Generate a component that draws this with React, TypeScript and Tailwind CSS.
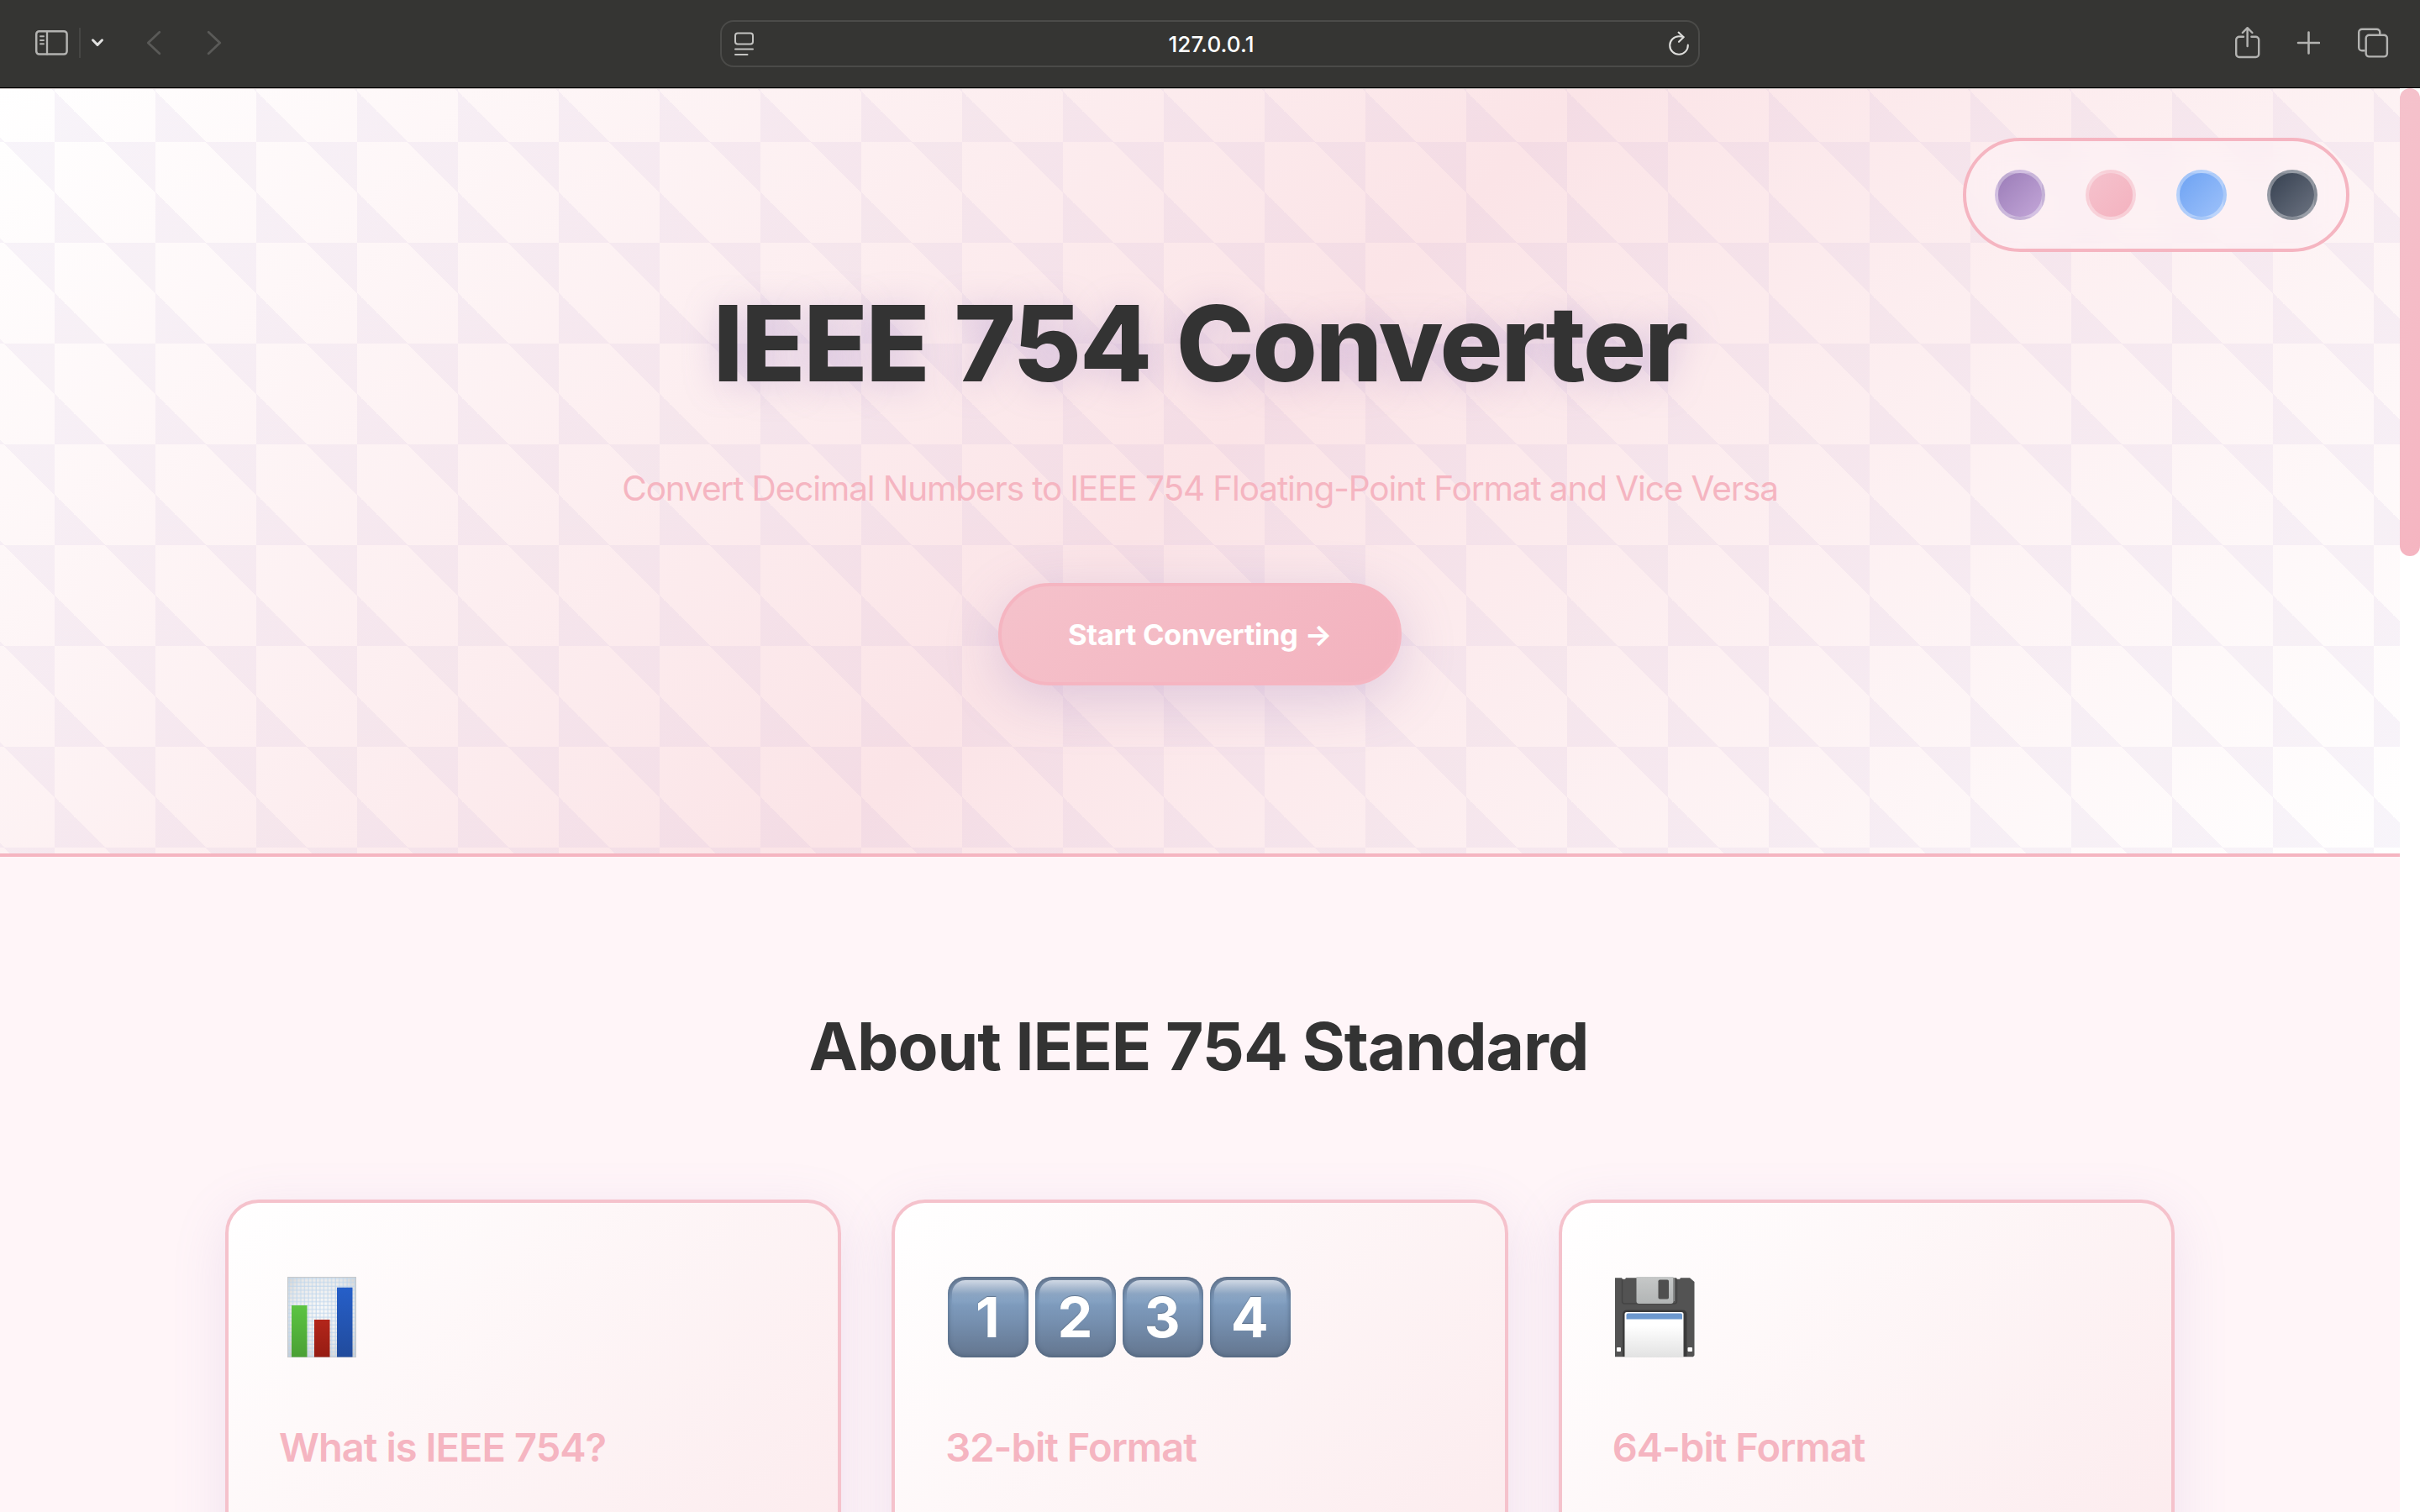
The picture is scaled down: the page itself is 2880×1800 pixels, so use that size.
import type { ReactNode } from "react";

function SidebarIcon() {
  return (
    <svg className="w-[40px] h-[32px]" viewBox="41 35 40 32" fill="none" stroke="#b3b3b1" strokeLinecap="round">
      <rect x="43.2" y="37.2" width="36.4" height="27.4" rx="3.5" strokeWidth="2.5" />
      <path d="M56 37.5v27" strokeWidth="2.3" />
      <path d="M48 43.3h4M48 48h4M48 52.3h4" strokeWidth="1.9" />
    </svg>
  );
}

function ChevronDown() {
  return (
    <svg className="w-[16px] h-[12px]" viewBox="108 46 16 12" fill="none" stroke="#e2e2e1" strokeWidth="3" strokeLinecap="round" strokeLinejoin="round">
      <path d="M110.5 48.8l5.5 5.6 5.5-5.6" />
    </svg>
  );
}

function ArrowLeft() {
  return (
    <svg className="w-[18px] h-[30px]" viewBox="174 36 18 30" fill="none" stroke="#5a5a58" strokeWidth="2.8" strokeLinecap="round" strokeLinejoin="round">
      <path d="M189.8 38.3L176.3 51l13.5 12.7" />
    </svg>
  );
}

function ArrowRight() {
  return (
    <svg className="w-[18px] h-[30px]" viewBox="246 36 18 30" fill="none" stroke="#5a5a58" strokeWidth="2.8" strokeLinecap="round" strokeLinejoin="round">
      <path d="M248.2 38.3L261.7 51l-13.5 12.7" />
    </svg>
  );
}

function ReaderIcon() {
  return (
    <svg className="w-[24px] h-[30px]" viewBox="873 37 24 30" fill="none" stroke="#c4c4c2" strokeWidth="2" strokeLinecap="round">
      <rect x="875" y="39.5" width="21" height="13" rx="3" />
      <path d="M875 58.4h21M875 65h14.5" />
    </svg>
  );
}

function ReloadIcon() {
  return (
    <svg className="w-[26px] h-[30px]" viewBox="1985 38 26 30" fill="none" stroke="#dededc" strokeWidth="2.1" strokeLinecap="round" strokeLinejoin="round">
      <path d="M2008.8 54.6a10.8 10.8 0 1 1-10.8-10.4q3 0 5.4.9" />
      <path d="M1997.6 39.6l6 5.6-5.6 5.6" />
    </svg>
  );
}

function ShareIcon() {
  return (
    <svg className="w-[32px] h-[40px]" viewBox="2659 31 32 40" fill="none" stroke="#b3b3b1" strokeWidth="2.4" strokeLinecap="round" strokeLinejoin="round">
      <path d="M2670 43.8h-5a3.8 3.8 0 0 0-3.8 3.8v16.8a3.6 3.6 0 0 0 3.6 3.6h19.8a3.6 3.6 0 0 0 3.6-3.6V47.6a3.8 3.8 0 0 0-3.8-3.8h-5" />
      <path d="M2674.6 55V33.5M2668.8 39l5.8-5.8 5.8 5.8" />
    </svg>
  );
}

function PlusIcon() {
  return (
    <svg className="w-[28px] h-[28px]" viewBox="2733 36.5 28 28" fill="none" stroke="#b3b3b1" strokeWidth="2.6" strokeLinecap="round">
      <path d="M2735 50.5h25M2747.5 38v25" />
    </svg>
  );
}

function TabsIcon() {
  return (
    <svg className="w-[38px] h-[36px]" viewBox="2805 33 38 36" fill="none" stroke="#b3b3b1" strokeWidth="2.4" strokeLinejoin="round">
      <path d="M2814.5 60.2h-3.5a3.8 3.8 0 0 1-3.8-3.8V38.5a3.8 3.8 0 0 1 3.8-3.8h17.5a3.8 3.8 0 0 1 3.8 3.8v3" />
      <rect x="2815.7" y="41.8" width="25.2" height="25.6" rx="3.8" />
    </svg>
  );
}

function Toolbar() {
  return (
    <header className="flex h-[105px] items-center border-b border-black bg-[#353533]">
      <div className="flex w-[857px] items-center pb-[2px] pl-[41px]">
        <SidebarIcon />
        <div className="ml-[13px] h-9 w-[2px] bg-[#464644]" />
        <div className="ml-3"><ChevronDown /></div>
        <div className="ml-[50px]"><ArrowLeft /></div>
        <div className="ml-[54px]"><ArrowRight /></div>
      </div>
      <div className="flex h-[56px] w-[1166px] items-center justify-between rounded-[16px] border-2 border-[#4b4b49] pr-[10px] pl-[14px]">
        <ReaderIcon />
        <span className="pt-px pl-px text-[26px] leading-[30px] font-medium tracking-[0.1px] text-white">127.0.0.1</span>
        <ReloadIcon />
      </div>
      <div className="flex flex-1 items-center justify-end pr-[37px] pb-[2px]">
        <ShareIcon />
        <div className="ml-[42px]"><PlusIcon /></div>
        <div className="ml-[44px]"><TabsIcon /></div>
      </div>
    </header>
  );
}

const swatches = [
  "bg-[linear-gradient(135deg,#9b7db8,#c3a6d8)]",
  "bg-[linear-gradient(135deg,#f5c2cd,#f4b2bf)]",
  "bg-[linear-gradient(135deg,#6ea3f3,#9dc1fa)]",
  "bg-[linear-gradient(135deg,#374151,#6b7280)]",
];

function ThemeSwitcher() {
  return (
    <div className="absolute top-[59px] right-[60px] flex h-[136px] items-center gap-12 rounded-full border-4 border-[#f5b5c1] bg-[#fdf1f5]/60 px-[34px] backdrop-blur-[20px]">
      {swatches.map((s) => (
        <button key={s} className={`size-[60px] rounded-full border-4 border-white/35 ${s}`} />
      ))}
    </div>
  );
}

function Hero() {
  return (
    <section className="relative h-[915px] shrink-0 border-b-4 border-[#f5b5c1] bg-[linear-gradient(135deg,#ffffff_0%,#fbe4e7_50%,#ffffff_100%)]">
      <div className="absolute inset-0 border-t border-[#c9c3c2] bg-[linear-gradient(45deg,rgba(175,145,205,0.09)_25%,transparent_25%,transparent_75%,rgba(175,145,205,0.09)_75%)] bg-[length:120px_120px] bg-[position:65px_63px]" />
      <div className="relative flex flex-col items-center pt-[229px]">
        <h1 className="text-[125px] leading-[150px] font-extrabold tracking-[-2.1px] text-[#333333] [word-spacing:5.5px] [text-shadow:0_4px_40px_rgba(155,125,195,0.34)]">
          IEEE 754 Converter
        </h1>
        <p className="mt-[66px] text-[40.5px] leading-[64px] font-[440] tracking-[-1.12px] text-[#f5b5c1]">
          Convert Decimal Numbers to IEEE 754 Floating-Point Format and Vice Versa
        </p>
        <button className="mt-[80px] flex h-[122px] w-[480px] items-center justify-center rounded-full border-4 border-[#f5b5c1] bg-[linear-gradient(135deg,#f5c2cb,#f3b2be)] pt-px text-[34.5px] font-[650] tracking-[-0.35px] text-white shadow-[0_16px_64px_rgba(155,125,190,0.3)]">
          Start Converting →
        </button>
      </div>
      <ThemeSwitcher />
    </section>
  );
}

function ChartEmoji() {
  return (
    <svg className="ml-[10px] h-24 w-[82px]" viewBox="0 0 82 96">
      <defs>
        <pattern id="grid" width="4.6" height="4.6" patternUnits="userSpaceOnUse">
          <path d="M0 2h4.6M2 0v4.6" stroke="#bdd4ec" strokeWidth="0.9" />
        </pattern>
        <radialGradient id="paper" cx="50%" cy="42%" r="75%">
          <stop offset="0" stopColor="#fafafa" />
          <stop offset="0.6" stopColor="#e9e9e9" />
          <stop offset="1" stopColor="#c6c6c6" />
        </radialGradient>
        <linearGradient id="green" x2="0" y2="1"><stop stopColor="#5cc442" /><stop offset="1" stopColor="#4aa034" /></linearGradient>
        <linearGradient id="red" x2="0" y2="1"><stop stopColor="#b3261b" /><stop offset="1" stopColor="#961c13" /></linearGradient>
        <linearGradient id="blue" x2="0" y2="1"><stop stopColor="#265fc9" /><stop offset="1" stopColor="#214b9c" /></linearGradient>
      </defs>
      <rect width="82" height="96" fill="url(#paper)" />
      <rect width="82" height="96" fill="url(#grid)" />
      <rect x="0.5" y="0.5" width="81" height="95" fill="none" stroke="#c6c8cb" />
      <rect x="5" y="34" width="18.5" height="61.5" fill="url(#green)" />
      <rect x="32" y="51" width="18.5" height="44.5" fill="url(#red)" />
      <rect x="59" y="12.7" width="18.5" height="82.8" fill="url(#blue)" />
    </svg>
  );
}

function Keycaps() {
  return (
    <div className="flex gap-2 pl-[3px]">
      {["1", "2", "3", "4"].map((d) => (
        <span
          key={d}
          className="relative flex size-24 items-center justify-center rounded-[20px] bg-[linear-gradient(180deg,#6f8099_0%,#7f9dbf_30%,#7690b0_55%,#63758e_100%)] text-[66.5px] leading-none font-bold text-white shadow-[inset_0_0_5px_1px_rgba(65,85,110,0.6)]"
        >
          <span className="absolute inset-x-[5px] top-[4px] h-[30px] rounded-t-[16px] bg-[linear-gradient(180deg,rgba(225,232,242,0.85),rgba(160,185,212,0.45)_55%,transparent)]" />
          <span className="relative -ml-[2px] [text-shadow:0_-1px_1px_rgba(60,75,95,0.5)]">{d}</span>
        </span>
      ))}
    </div>
  );
}

function FloppyEmoji() {
  return (
    <svg className="ml-[3px] h-24 w-[95px]" viewBox="0 0 95 96">
      <defs>
        <linearGradient id="label" x2="0" y2="1"><stop offset="0.3" stopColor="#ffffff" /><stop offset="1" stopColor="#e2e2e2" /></linearGradient>
        <linearGradient id="metal" x2="0" y2="1"><stop stopColor="#c6c8c8" /><stop offset="1" stopColor="#b2b5b5" /></linearGradient>
      </defs>
      <path d="M0 1.2h8l1 1.5h3l1-1.5h60l1 1.5h3l1-1.5h11L94.5 6v87.5l-1.5 1.7H0z" fill="#535353" />
      <path d="M8.5 3v26q0 3 3 3h59q3 0 3-3V3" fill="none" stroke="#444444" strokeWidth="1.5" />
      <path d="M25.5 0H69.5v29q0 3-3 3h-38q-3 0-3-3z" fill="url(#metal)" />
      <path d="M70.3 1v28" stroke="#8b8d8d" strokeWidth="1.3" />
      <rect x="51.5" y="3.5" width="12.5" height="23" rx="1.8" fill="#4f4f4f" />
      <path d="M9 95V45q0-5.5 5.5-5.5h65.5q5.5 0 5.5 5.5V95z" fill="#3b3b3b" />
      <path d="M11.5 96V44.5q0-2.5 2.5-2.5h65q2.5 0 2.5 2.5V96z" fill="url(#label)" />
      <path d="M13.5 50.5V45.5q0-2 2-2h62.5q2 0 2 2v5z" fill="#6c98ce" />
      <rect x="2" y="84" width="5" height="5" rx="1" fill="#fff" />
      <rect x="86.5" y="84" width="5.5" height="5" rx="1" fill="#fff" />
    </svg>
  );
}

function Card({ icon, title }: { icon: ReactNode; title: string }) {
  return (
    <article className="h-[720px] rounded-[40px] border-4 border-[#f5c2cc] bg-[linear-gradient(135deg,#ffffff,#fbe6e9)] px-[60px] pt-[88px] shadow-[0_16px_64px_rgba(155,125,190,0.16)]">
      <div className="h-24">{icon}</div>
      <h3 className="mt-[79px] text-[47px] leading-[56px] font-[620] tracking-[-0.95px] text-[#f5b5c1]">{title}</h3>
    </article>
  );
}

function About() {
  return (
    <section className="flex flex-1 flex-col items-center bg-[#fff5f8] pt-[178px]">
      <h2 className="pr-[3px] text-[78.4px] leading-[96px] font-bold tracking-[-1px] text-[#333333]">About IEEE 754 Standard</h2>
      <div className="mt-[134px] grid w-[2320px] grid-cols-3 gap-[60px]">
        <Card icon={<ChartEmoji />} title="What is IEEE 754?" />
        <Card icon={<Keycaps />} title="32-bit Format" />
        <Card icon={<FloppyEmoji />} title="64-bit Format" />
      </div>
    </section>
  );
}

export default function App() {
  return (
    <div className="h-[1800px] w-[2880px] overflow-hidden font-['Inter',sans-serif]">
      <Toolbar />
      <div className="flex h-[1695px]">
        <main className="flex h-full w-[2856px] flex-col overflow-hidden">
          <Hero />
          <About />
        </main>
        <div className="w-6 bg-white">
          <div className="h-[557px] rounded-xl bg-[linear-gradient(135deg,#f5c2cc,#f5b5c1)]" />
        </div>
      </div>
    </div>
  );
}
